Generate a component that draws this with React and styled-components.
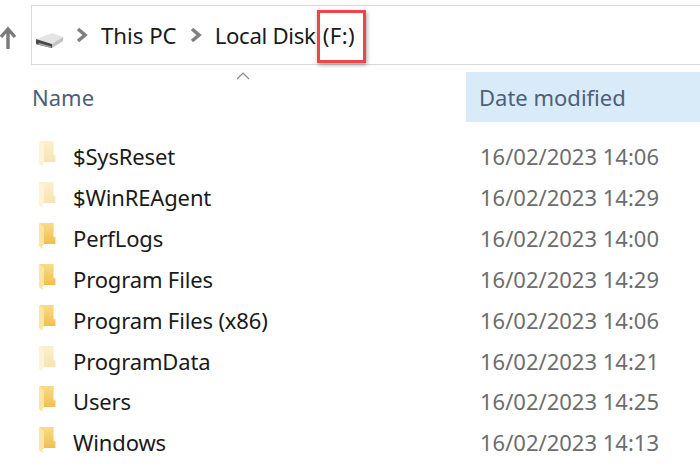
import React from "react"
import styled, { createGlobalStyle } from "styled-components"

const GlobalStyle = createGlobalStyle`
  html, body {
    margin: 0;
    padding: 0;
    background: #fff;
  }
  body {
    font-family: "Noto Sans", "Open Sans", "Liberation Sans", sans-serif;
  }
`

const Root = styled.div`
  width: 700px;
  height: 470px;
  overflow: hidden;
  position: relative;
  background: #fff;
`

const Toolbar = styled.div`
  display: flex;
  align-items: center;
  height: 60px;
  padding-top: 5px;
`

const UpButton = styled.div`
  width: 31px;
  flex: none;
  display: flex;
  justify-content: flex-start;
  padding-top: 6px;
`

const AddressBar = styled.div`
  flex: 1;
  height: 58px;
  border: 1px solid #d9d9d9;
  border-right: none;
  display: flex;
  align-items: center;
  padding-left: 3px;
  position: relative;
`

const Crumb = styled.span`
  font-size: 22.2px;
  color: #1a1a1a;
  white-space: pre;
  letter-spacing: ${(p) => (p.$tight ? "-0.3px" : "0")};
`

const DriveLetter = styled(Crumb)`
  margin-left: 7px;
  letter-spacing: 0.4px;
`

const Chevron = styled.svg`
  flex: none;
  width: 12px;
  height: 16px;
  margin: 0 ${(p) => p.$after}px 0 ${(p) => p.$before}px;
`

const DriveGlyph = styled.svg`
  flex: none;
  width: 30px;
  height: 28px;
`

const Highlight = styled.div`
  position: absolute;
  left: 285px;
  top: 4px;
  width: 43px;
  height: 47px;
  border: 3px solid #f0444c;
  box-shadow: 1px 2px 4px rgba(0, 0, 0, 0.35);
`

const SortCaret = styled.svg`
  position: absolute;
  left: 236px;
  top: 72px;
  width: 14px;
  height: 8px;
`

const HeaderRow = styled.div`
  display: grid;
  grid-template-columns: 466px 1fr;
  height: 50px;
  margin-top: 7px;
`

const HeaderCell = styled.div`
  display: flex;
  align-items: center;
  padding-left: ${(p) => (p.$active ? "13px" : "32px")};
  font-size: 22px;
  color: #4c607a;
  background: ${(p) => (p.$active ? "#d9ebf9" : "transparent")};
`

const List = styled.div`
  padding-top: 14px;
`

const Row = styled.div`
  display: grid;
  grid-template-columns: 39px 34px 407px 1fr;
  align-items: center;
  height: 40.85px;
`

const FileName = styled.span`
  font-size: 22px;
  letter-spacing: -0.15px;
  color: #1a1a1a;
  white-space: nowrap;
`

const DateText = styled.span`
  font-size: 22px;
  color: #6d6d6d;
  white-space: nowrap;
`

const FolderGlyph = styled.svg`
  width: 17px;
  height: 27px;
  margin-bottom: 5px;
  opacity: ${(p) => (p.$faded ? 0.42 : 1)};
`

const UpArrow = () => (
  <svg width="18" height="24" viewBox="0 0 18 24">
    <path d="M1 11 L8 3 L15 11 M8 4 V23" fill="none" stroke="#7a7a7a" strokeWidth="3.4" />
  </svg>
)

const DriveIcon = () => (
  <DriveGlyph viewBox="0 0 30 28">
    <path d="M1 18 L16 12.5 Q17 12 18 12.3 L28 16 L17 23 Z" fill="#e4e4e4" />
    <path d="M1 18 L17 23 V27 L2 23.5 Q1 23 1 22 Z" fill="#4a4a4a" />
    <path d="M4 22 L16 25.5 V27 L3 23.5 Z" fill="#a8a8a8" />
    <path d="M17 23 L28 16 V20 L17 27 Z" fill="#c2c2c2" />
  </DriveGlyph>
)

const Arrow = ({ before, after }) => (
  <Chevron $before={before} $after={after} viewBox="0 0 12 16">
    <path d="M2 2 L9 8 L2 14" fill="none" stroke="#808080" strokeWidth="3.6" />
  </Chevron>
)

const FolderIcon = ({ faded }) => (
  <FolderGlyph $faded={faded} viewBox="0 0 17 27">
    <defs>
      <linearGradient id="folderFill" x1="0" y1="0" x2="0" y2="1">
        <stop offset="0" stopColor="#f9dc86" />
        <stop offset="1" stopColor="#efbf4c" />
      </linearGradient>
    </defs>
    <path d="M1 1 H14 V14 L17 16 V22 H1 Z" fill="url(#folderFill)" />
    <path d="M14 1 H15 V14 L17 15.5 V22 H16 V16 L14 14.5 Z" fill="#fbe6a8" />
    <path d="M0 1 L5 5 V23 H3.6 V27 L0 24 Z" fill="#fde4a0" />
  </FolderGlyph>
)

const files = [
  { name: "$SysReset", date: "16/02/2023 14:06", hidden: true },
  { name: "$WinREAgent", date: "16/02/2023 14:29", hidden: true },
  { name: "PerfLogs", date: "16/02/2023 14:00" },
  { name: "Program Files", date: "16/02/2023 14:29" },
  { name: "Program Files (x86)", date: "16/02/2023 14:06" },
  { name: "ProgramData", date: "16/02/2023 14:21", hidden: true },
  { name: "Users", date: "16/02/2023 14:25" },
  { name: "Windows", date: "16/02/2023 14:13" },
]

const App = () => (
  <Root>
    <GlobalStyle />
    <Toolbar>
      <UpButton>
        <UpArrow />
      </UpButton>
      <AddressBar>
        <DriveIcon />
        <Arrow before={11} after={13} />
        <Crumb>This PC</Crumb>
        <Arrow before={13} after={13} />
        <Crumb $tight>Local Disk</Crumb>
        <DriveLetter>(F:)</DriveLetter>
        <Highlight />
      </AddressBar>
    </Toolbar>
    <SortCaret viewBox="0 0 14 8">
      <path d="M1 7 L7 1 L13 7" fill="none" stroke="#8a8a8a" strokeWidth="1.2" />
    </SortCaret>
    <HeaderRow>
      <HeaderCell>Name</HeaderCell>
      <HeaderCell $active>Date modified</HeaderCell>
    </HeaderRow>
    <List>
      {files.map((f) => (
        <Row key={f.name}>
          <span />
          <FolderIcon faded={f.hidden} />
          <FileName>{f.name}</FileName>
          <DateText>{f.date}</DateText>
        </Row>
      ))}
    </List>
  </Root>
)

export default App
